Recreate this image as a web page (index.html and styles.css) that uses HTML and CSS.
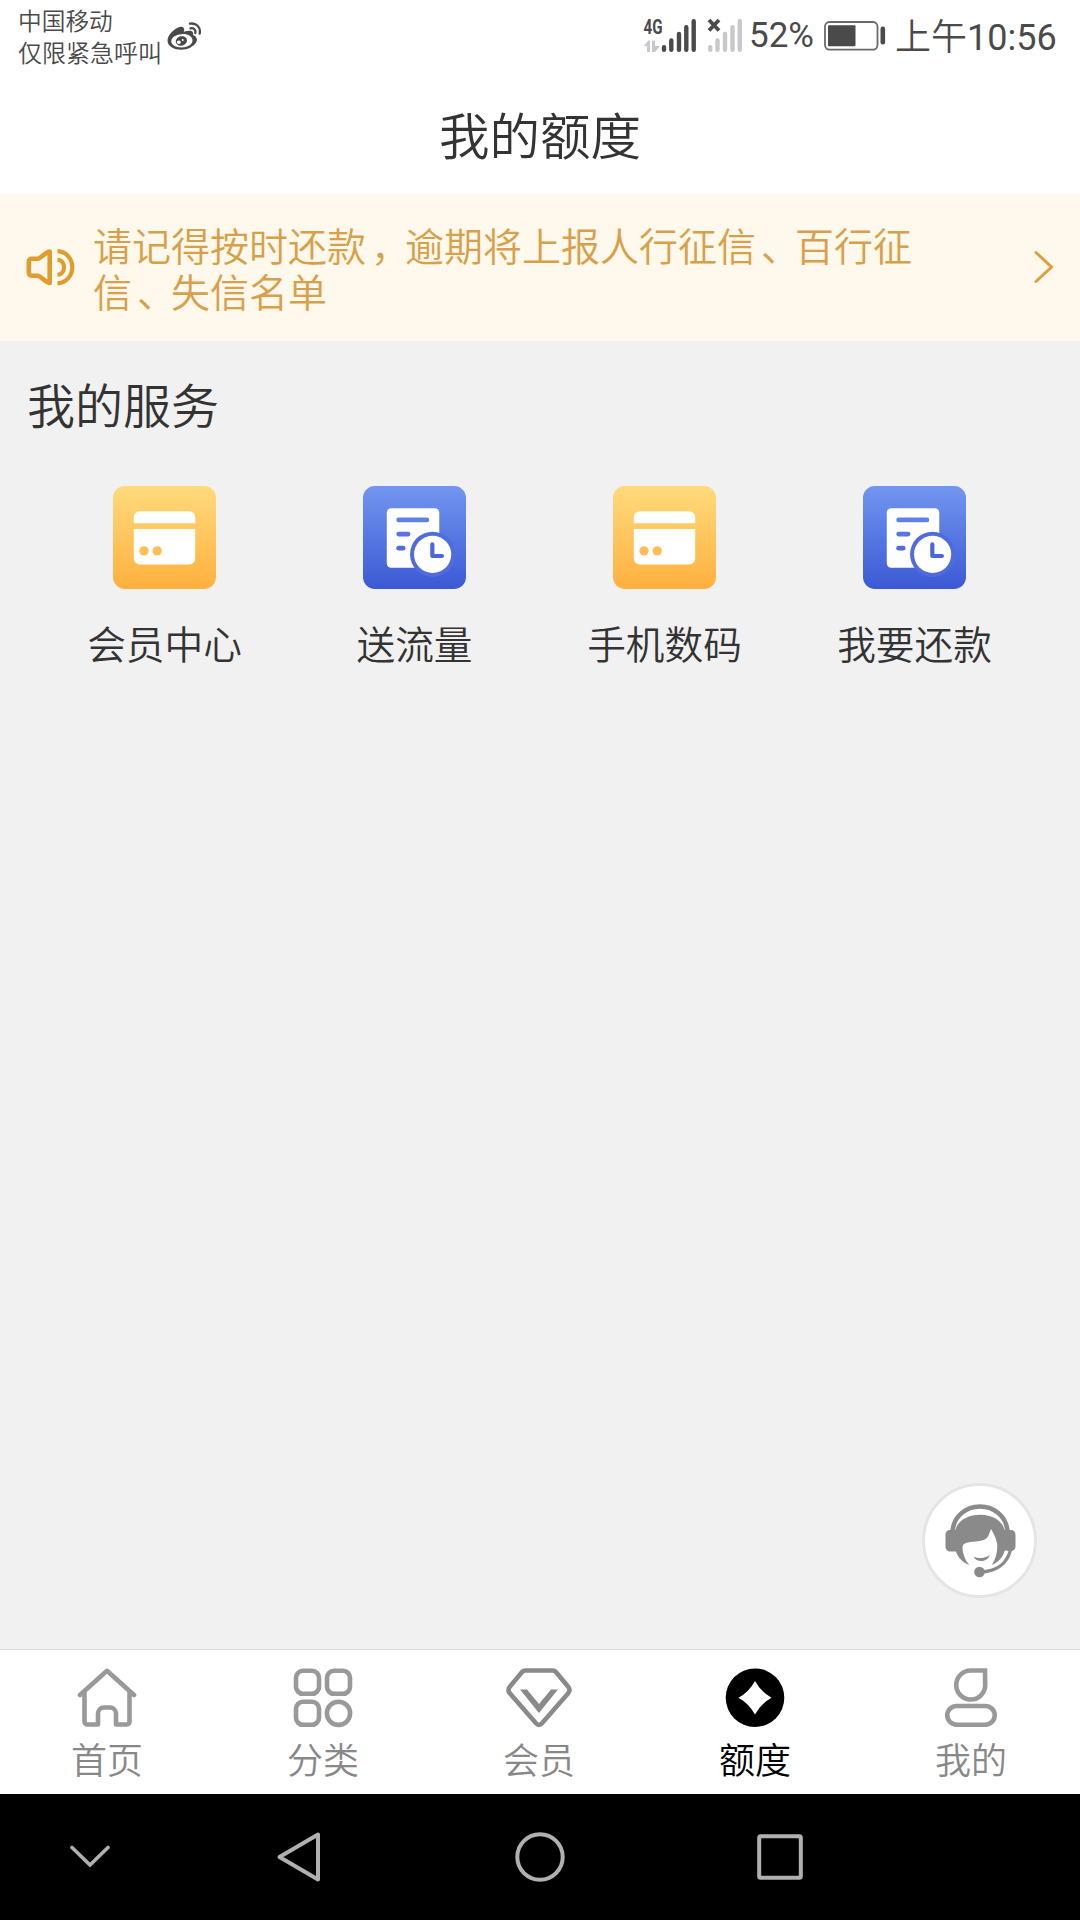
FILE: index.html
```html
<!DOCTYPE html>
<html lang="zh-CN">
<head>
<meta charset="utf-8">
<title>我的额度</title>
<link rel="stylesheet" href="styles.css">
</head>
<body>
<svg class="defs" aria-hidden="true">
  <defs>
    <linearGradient id="gold" x1="0" y1="0" x2="0" y2="1"><stop offset="0" stop-color="#ffda7c"/><stop offset="1" stop-color="#ffb03e"/></linearGradient>
    <linearGradient id="blue" x1="0" y1="0" x2="0" y2="1"><stop offset="0" stop-color="#7296f0"/><stop offset="1" stop-color="#3b59d4"/></linearGradient>
    <symbol id="card" viewBox="0 0 104 104">
      <rect width="104" height="104" rx="12" fill="url(#gold)"/>
      <path d="M21 37.500v-6a6 6 0 0 1 6-6h50a6 6 0 0 1 6 6v6zM21 43.300h62v30a6 6 0 0 1-6 6H27a6 6 0 0 1-6-6z" fill="#fff"/>
      <circle cx="31.300" cy="65.500" r="4.700" fill="#ffbe56"/><circle cx="44.600" cy="65.500" r="4.700" fill="#ffbe56"/>
    </symbol>
    <symbol id="bill" viewBox="0 0 104 104">
      <rect width="104" height="104" rx="12" fill="url(#blue)"/>
      <rect x="24" y="22.500" width="53" height="60" rx="4.500" fill="#fff"/>
      <g stroke-width="4.800" stroke-linecap="round"><path d="M36 34.300h28.500" stroke="#5f80e6"/><path d="M36 48.500h9.500" stroke="#5875e2"/><path d="M36 62.800h4.500" stroke="#506cde"/></g>
      <circle cx="70.300" cy="69" r="22.800" fill="#4f6bdd"/>
      <circle cx="70.300" cy="69" r="18.800" fill="#fff"/>
      <path d="M70 59v11.700h9.700" fill="none" stroke="#4a66da" stroke-width="4.200" stroke-linecap="round" stroke-linejoin="round"/>
    </symbol>
  </defs>
</svg>

<div class="phone">
  <div class="status">
    <div class="carrier"><span class="sim-a">中国移动</span><span class="sim-b">仅限紧急呼叫</span></div>
    <svg class="weibo" width="35" height="29" viewBox="0 0 35 29">
      <path fill="#4a4a4a" fill-rule="evenodd" d="M14.500 4.800C10 4.500 4 10 1.500 14.500C-.5 18.500 .5 23 5 25.500C10 28.500 18 28.500 23.500 25.500C28 23 31 19.500 29.500 16C29 14.500 27.500 13.500 26 13C26.500 11 26 9.200 23.500 8.800C21.500 8.500 19 9 16.800 9.800C17.600 7.500 17.300 5.200 14.500 4.800ZM14.500 12.200C20.500 11.600 25.500 14.300 25.500 18.500C25.500 22.500 20.500 25.500 14.500 25.500C8.500 25.500 4.300 23 4.300 19.300C4.300 15.500 8.500 12.800 14.500 12.200Z"/>
      <path fill="#4a4a4a" fill-rule="evenodd" d="M14 14.300c4-.5 6.700 2 5.900 5.200c-.8 3-4.500 4.900-7.600 4.100c-3-.8-4.300-3.800-2.900-6.300c.9-1.700 2.700-2.800 4.600-3ZM11.800 18.500a2 1.800 0 1 0 .1 3.600a2 1.800 0 0 0-.1-3.600ZM15.700 17a1 1 0 1 0 .1 2a1 1 0 0 0-.1-2Z"/>
      <path fill="none" stroke="#4a4a4a" stroke-width="2.300" stroke-linecap="round" d="M23 1.700C29 .5 34 5 32.700 11.500M23.500 6.300C26.800 5.700 29 8 28.300 11"/>
    </svg>
    <svg class="signals" width="105" height="46" viewBox="640 8 105 46">
      <text class="net" x="643.500" y="34" textLength="19" lengthAdjust="spacingAndGlyphs">4G</text>
      <path fill="#c8c8c8" d="M643.500 46l5-5.500h1.500V52h-3v-6zM652 40.500h3V46h5l-5 6h-3z"/>
      <g fill="none" stroke-width="4.400" stroke-linecap="round">
        <path stroke="#4a4a4a" d="M664 47.300v2.400M671.300 40.500v9.200M679 34v15.700M686.300 27.300v22.400M693.700 21.300v28.400"/>
        <path stroke="#c8c8c8" d="M710.300 47.300v2.400M717.500 40.500v9.200M725 34v15.700M732.500 27.300v22.400M739.800 21.300v28.400"/>
        <path stroke="#4a4a4a" stroke-width="3.800" stroke-linecap="butt" d="M709 20l10 10.500M719 20l-10 10.500"/>
      </g>
    </svg>
    <span class="percent">52%</span>
    <svg class="battery" width="62" height="30" viewBox="0 0 62 30">
      <rect x="1" y="1" width="52.500" height="27.600" rx="4.500" fill="none" stroke="#6a6a6a" stroke-width="1.800"/>
      <rect x="4" y="4.300" width="27.500" height="21" rx="1" fill="#4a4a4a"/>
      <rect x="56.500" y="5.500" width="4.600" height="18" rx="2.200" fill="#4a4a4a"/>
    </svg>
    <span class="clock">上午<b>10:56</b></span>
  </div>

  <h1 class="title">我的额度</h1>

  <div class="notice">
    <svg class="speaker" width="50" height="38" viewBox="0 0 50 38">
      <g fill="none" stroke="#e09c2c" stroke-width="4.600">
        <path stroke-linejoin="round" d="M23.700 3.500v31.500C19 34 15.500 28.500 12 27.700H5.500a2.700 2.700 0 0 1-2.700-2.700V13.500a2.700 2.700 0 0 1 2.700-2.700H12C15.500 10 19 4.500 23.700 3.500z"/>
        <path stroke-width="4.200" d="M31.500 3.200C40 3.500 46.300 10.500 46.300 19.200S40 35 31.500 35.300"/><path stroke-width="4.200" d="M31.500 11.600C35.800 12 38 15.300 38 19.200S35.800 26.500 31.500 26.900"/>
      </g>
    </svg>
    <p class="notice-text">请记得按时还款<span class="mark">，</span>逾期将上报人行征信<span class="mark">、</span>百行征<br>信<span class="mark">、</span>失信名单</p>
    <svg class="more" width="20" height="34" viewBox="0 0 20 34"><path d="M2 2.500L17.500 17L2 31.500" fill="none" stroke="#e0a040" stroke-width="3" stroke-linecap="round"/></svg>
  </div>

  <main class="content">
    <h2 class="heading">我的服务</h2>
    <div class="services">
      <div class="service"><svg class="tile"><use href="#card"/></svg><span>会员中心</span></div>
      <div class="service"><svg class="tile"><use href="#bill"/></svg><span>送流量</span></div>
      <div class="service"><svg class="tile"><use href="#card"/></svg><span>手机数码</span></div>
      <div class="service"><svg class="tile"><use href="#bill"/></svg><span>我要还款</span></div>
    </div>
    <div class="support">
      <svg width="72" height="74" viewBox="0 0 72 74">
        <path d="M7.500 27C9 12 21 2.500 35 2.500S61 12 62.500 27" fill="none" stroke="#8a8a8a" stroke-width="4.600"/>
        <path fill="#8a8a8a" d="M5 26h5.500C12 17.500 22 10.700 35.500 10.700C49 10.700 58 18 59.500 26H66a4.500 4.500 0 0 1 4.500 4.500v12A4.500 4.500 0 0 1 66 47h-6.500C58 53 54 58 47 60.800C50.500 55 52.300 49 52.300 42.500C52.300 36 49 30 46 25C44 30 43.500 34 38.500 36C31 38.500 24 37 19 40C16.500 42 17.500 47 19 51.500C20 55.500 22 58.500 24.500 61C17.500 58.500 13 53.500 11 47.500H5A4.500 4.500 0 0 1 .5 43V30.500A4.500 4.500 0 0 1 5 26z"/>
        <path fill="#8a8a8a" d="M28.500 52.500c5 2.300 10.500 2.300 16.300-1.500c-2.500 7.500-13.500 8-16.300 1.500z"/>
        <path fill="none" stroke="#fff" stroke-width="2.200" d="M61.500 46.500C60 53 56.500 58 51 61.500"/>
        <path fill="none" stroke="#8a8a8a" stroke-width="3.200" d="M65.500 46C62 60 51 67.700 35 68"/>
        <circle cx="34.500" cy="68" r="5.300" fill="#8a8a8a"/>
      </svg>
    </div>
  </main>

  <nav class="tabs">
    <a class="tab"><svg width="64" height="60" viewBox="0 0 64 60"><g fill="none" stroke="#999" stroke-width="4.600" stroke-linecap="round" stroke-linejoin="round"><path d="M5 27L32 2.800L59 27"/><path d="M9.500 25v28.500a3 3 0 0 0 3 3H23V45.500a6 6 0 0 1 6-6h6a6 6 0 0 1 6 6v11h10.500a3 3 0 0 0 3-3V25"/></g></svg><span>首页</span></a>
    <a class="tab"><svg width="64" height="60" viewBox="0 0 64 60"><g fill="none" stroke="#999" stroke-width="4.600"><rect x="5" y="2.800" width="23" height="23" rx="7"/><rect x="36" y="2.800" width="23" height="23" rx="7"/><rect x="5" y="33.800" width="23" height="23" rx="7"/><circle cx="47.500" cy="45.300" r="11.600"/></g></svg><span>分类</span></a>
    <a class="tab"><svg width="66" height="60" viewBox="0 0 66 60"><path d="M19.500 2.500h27q2 0 3.500 1.500L62 18.500q3 3.500 0 7L36 55.300q-3 3.200-6 0L4 25.500q-3-3.500 0-7L16 4q1.500-1.500 3.500-1.500z" fill="none" stroke="#8a8a8a" stroke-width="4.600"/><path d="M14 21.500h7L33 36l12-14.500h7L33 45z" fill="#8a8a8a"/></svg><span>会员</span></a>
    <a class="tab active"><svg width="64" height="60" viewBox="0 0 64 60"><circle cx="32" cy="29.700" r="29.300" fill="#000"/><path d="M32 13Q38 24 48.500 29.700Q38 35.500 32 46.500Q26 35.500 15.500 29.700Q26 24 32 13z" fill="#fff"/></svg><span>额度</span></a>
    <a class="tab"><svg width="64" height="60" viewBox="0 0 64 60"><g fill="none" stroke="#999" stroke-width="4.600"><path d="M46 2.500H32a14.500 14.500 0 1 0 14.200 14.500z"/><rect x="8.300" y="38" width="47.400" height="18.700" rx="9.350"/></g></svg><span>我的</span></a>
  </nav>

  <div class="keys">
    <svg width="40" height="26" viewBox="0 0 40 26"><path d="M2 3.500L20 21L38 3.500" fill="none" stroke="#b0b0b0" stroke-width="3.600" stroke-linecap="round"/></svg>
    <svg width="46" height="52" viewBox="0 0 46 52"><path d="M42 3.500v45L3.500 26z" fill="none" stroke="#b0b0b0" stroke-width="4" stroke-linejoin="round"/></svg>
    <svg width="52" height="52" viewBox="0 0 52 52"><circle cx="26" cy="26" r="22.700" fill="none" stroke="#b0b0b0" stroke-width="4"/></svg>
    <svg width="46" height="46" viewBox="0 0 46 46"><rect x="2.200" y="2.200" width="41.600" height="41.600" rx="1.500" fill="none" stroke="#b0b0b0" stroke-width="4"/></svg>
  </div>
</div>
</body>
</html>
```

FILE: styles.css
```css
* { box-sizing: border-box; }
body {
  margin: 0;
  background: #fff;
  color: #333;
  font-family: "Noto Sans CJK SC", sans-serif;
  font-weight: 350;
}
h1, h2, p { margin: 0; font-weight: inherit; }
svg { display: block; flex: none; }
.defs { position: absolute; width: 0; height: 0; }
.phone { width: 1080px; height: 1920px; display: flex; flex-direction: column; overflow: hidden; }

.status { height: 74px; display: flex; align-items: flex-start; color: #4a4a4a; white-space: nowrap; }
.carrier { width: 167px; padding: 4px 0 0 18px; display: flex; flex-direction: column; line-height: 32px; }
.sim-a { font-size: 23.7px; }
.sim-b { font-size: 24px; }
.weibo { margin-top: 22px; }
.signals { margin: 8px 0 0 438px; }
.net { font: 700 21px Roboto, sans-serif; fill: #4a4a4a; }
.percent { width: 75px; margin-left: 4px; padding-top: 16px; font: 400 35px/40px Roboto, sans-serif; box-sizing: content-box; height: 40px; }
.battery { margin-top: 21px; }
.clock { margin-left: 9px; padding-top: 14px; font-size: 36px; line-height: 40px; }
.clock b { font-family: Roboto, sans-serif; font-weight: 400; }

.title { height: 120px; line-height: 118px; text-align: center; font-size: 50.5px; }

.notice { height: 147px; padding: 0 26px 1px; display: flex; align-items: center; background: #fff8ec; color: #d8a048; }
.notice-text { width: 830px; margin-left: 17px; font-size: 39px; line-height: 46px; }
/* half-width punctuation, centred in its full-width cell */
.mark { font-feature-settings: "halt"; padding: 0 14.500px 0 5px; }
.more { margin-left: auto; }

.content { flex: 1; position: relative; background: #f1f1f1; }
.heading { padding: 27px 27px 0; font-size: 48px; line-height: 70px; }
.services { display: grid; grid-template-columns: repeat(4, 250px); justify-content: center; margin-top: 48px; }
.service { display: flex; flex-direction: column; align-items: center; padding-right: 1px; font-size: 38.7px; line-height: 56px; }
.tile { width: 103px; height: 103px; margin-bottom: 25px; }
.support { position: absolute; right: 43px; bottom: 51px; width: 115px; height: 115px; padding-left: 2px; display: flex; align-items: center; justify-content: center; background: #fff; border: 3px solid #e5e5e5; border-radius: 50%; }

.tabs { height: 145px; display: grid; grid-template-columns: repeat(5, 1fr); background: #fff; border-top: 1px solid #ddd; color: #888; }
.tab { display: flex; flex-direction: column; align-items: center; padding: 18px 2px 0 0; font-size: 36px; line-height: 50px; }
.tab span { margin-top: 5px; }
.active { color: #000; }

.keys { height: 126px; padding: 0 0 0 70px; display: grid; grid-template-columns: 206px 238px 243px auto; align-items: center; background: #000; }
```
